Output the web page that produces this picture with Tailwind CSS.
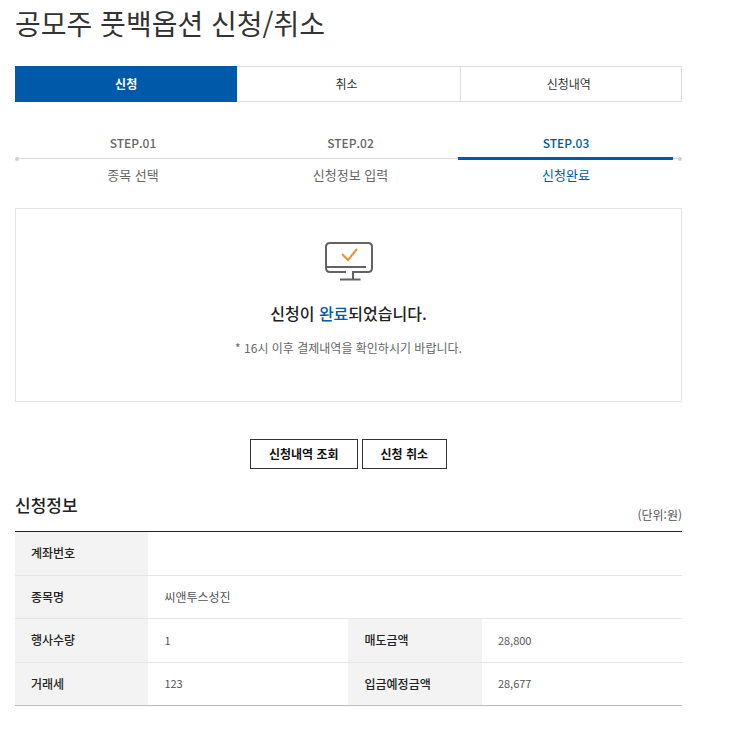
<!DOCTYPE html>
<html lang="ko">
<head>
  <meta charset="UTF-8" />
  <meta name="viewport" content="width=device-width, initial-scale=1.0"/>
  <title>공모주 풋백옵션 신청/취소</title>
  <script src="https://cdn.jsdelivr.net/npm/@tailwindcss/browser@4"></script>
</head>
<body class="bg-white pl-[15px] pr-[61px] pt-[3px] font-['Noto_Sans_CJK_KR',sans-serif] text-xs text-[#555]">
  <h1 class="text-[28px] leading-10 font-normal text-[#333]">공모주 풋백옵션 신청/취소</h1>

  <!-- Tabs -->
  <nav class="mt-[23px] grid grid-cols-3 text-center leading-[34px]">
    <a href="#apply" aria-current="page" class="border border-[#0059a9] bg-[#0059a9] font-bold text-white">신청</a>
    <a href="#cancel" class="border-y border-[#ddd] pr-1 text-[#333]">취소</a>
    <a href="#history" class="border border-[#ddd] pr-1 text-[#333]">신청내역</a>
  </nav>

  <!-- Steps -->
  <ol class="mt-[31px] grid grid-cols-[236fr_207fr_224fr] text-center text-[13px] leading-5 text-[#666]">
    <li>
      <strong class="block text-xs leading-5 font-medium">STEP.01</strong>
      <div class="flex h-[11px] items-center">
        <span class="size-1 rounded-full bg-[#ccd0d4]"></span>
        <span class="h-px flex-1 bg-[#ddd]"></span>
      </div>
      <span class="block pt-px">종목 선택</span>
    </li>
    <li>
      <strong class="block pr-2 text-xs leading-5 font-medium">STEP.02</strong>
      <div class="flex h-[11px] items-center">
        <span class="h-px flex-1 bg-[#ddd]"></span>
      </div>
      <span class="block pt-px pr-2">신청정보 입력</span>
    </li>
    <li class="text-[#0059a9]" aria-current="step">
      <strong class="block pr-2 text-xs leading-5 font-medium">STEP.03</strong>
      <div class="flex h-[11px] items-center">
        <span class="h-[3px] flex-1 bg-[#0059a9]"></span>
        <span class="h-px w-[5px] bg-[#ddd]"></span>
        <span class="size-1 rounded-full bg-[#ccd0d4]"></span>
      </div>
      <span class="block pt-px pr-2">신청완료</span>
    </li>
  </ol>

  <!-- Result -->
  <section class="mt-[23px] flex h-[194px] flex-col items-center border border-[#e3e3e3] pt-8">
    <svg class="h-10 w-[50px]" viewBox="0 0 50 40" fill="none" stroke-width="2">
      <path d="M22 31H6Q2 31 2 27V6Q2 2 6 2H44Q48 2 48 6V27Q48 31 44 31H29V38.500M16 38.500H36.500M2 26H42" stroke="#636363"/>
      <path d="M18 13L24 19L33 8" stroke="#f58a33"/>
    </svg>
    <p class="mt-5 text-base leading-6 font-medium text-[#222]">신청이 <span class="text-[#0059a9]">완료</span>되었습니다.</p>
    <p class="mt-[13px] leading-5 text-[#666]">* 16시 이후 결제내역을 확인하시기 바랍니다.</p>
  </section>

  <div class="mt-[37px] flex justify-center gap-1 leading-7">
    <button type="button" class="border border-[#333] px-[18px] font-bold text-[#111]">신청내역 조회</button>
    <button type="button" class="border border-[#333] px-[18px] font-bold text-[#111]">신청 취소</button>
  </div>

  <!-- Application info -->
  <div class="mt-6 flex h-[38px] items-start justify-between">
    <h2 class="text-[17px] leading-6 font-medium text-[#222]">신청정보</h2>
    <span class="mt-3 leading-5">(단위:원)</span>
  </div>
  <table class="h-[175px] w-full table-fixed border-collapse border-t border-b border-t-[#222] border-b-[#bbb] text-left">
    <colgroup>
      <col class="w-1/5"><col class="w-3/10"><col class="w-1/5"><col class="w-3/10">
    </colgroup>
    <tbody class="divide-y divide-[#e6e6e6]">
      <tr>
        <th scope="row" class="bg-[#f3f3f3] pl-4 font-medium text-[#222]">계좌번호</th>
        <td colspan="3" class="pl-4"></td>
      </tr>
      <tr>
        <th scope="row" class="bg-[#f3f3f3] pl-4 font-medium text-[#222]">종목명</th>
        <td colspan="3" class="pl-4">씨앤투스성진</td>
      </tr>
      <tr>
        <th scope="row" class="bg-[#f3f3f3] pl-4 font-medium text-[#222]">행사수량</th>
        <td class="pl-4 text-[11px]">1</td>
        <th scope="row" class="bg-[#f3f3f3] pl-4 font-medium text-[#222]">매도금액</th>
        <td class="pl-4 text-[11px]">28,800</td>
      </tr>
      <tr>
        <th scope="row" class="bg-[#f3f3f3] pl-4 font-medium text-[#222]">거래세</th>
        <td class="pl-4 text-[11px]">123</td>
        <th scope="row" class="bg-[#f3f3f3] pl-4 font-medium text-[#222]">입금예정금액</th>
        <td class="pl-4 text-[11px]">28,677</td>
      </tr>
    </tbody>
  </table>
</body>
</html>
